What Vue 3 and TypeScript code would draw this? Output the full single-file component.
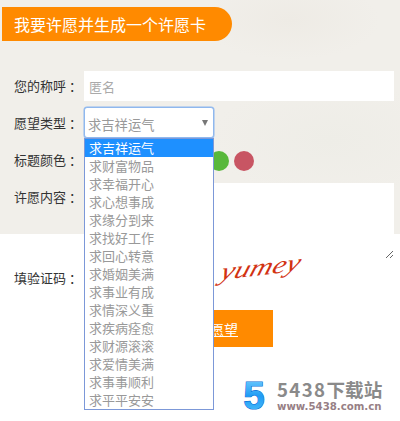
<script setup lang="ts">
const colors: string[] = ['#ff8a00', '#e0529c', '#8e5bd0', '#3d8fe0', '#2fb5b5', '#58b83c', '#c85563']
const wishes: string[] = [
  '求吉祥运气', '求财富物品', '求幸福开心', '求心想事成', '求缘分到来',
  '求找好工作', '求回心转意', '求婚姻美满', '求事业有成', '求情深义重',
  '求疾病痊愈', '求财源滚滚', '求爱情美满', '求事事顺利', '求平平安安'
]
</script>

<template>
  <div class="page">
    <section class="paper">
      <h1 class="title">我要许愿并生成一个许愿卡</h1>
      <div class="row name-row">
        <label class="label">您的称呼 ：</label>
        <input class="name" placeholder="匿名" />
      </div>
      <div class="row type-row">
        <label class="label">愿望类型 ：</label>
        <div class="select">
          <span>求吉祥运气</span>
          <i class="arrow"></i>
          <ul class="options">
            <li v-for="(w, i) in wishes" :key="w" :class="{ on: i === 0 }">{{ w }}</li>
          </ul>
        </div>
      </div>
      <div class="row color-row">
        <label class="label">标题颜色 ：</label>
        <div class="dots">
          <span v-for="c in colors" :key="c" class="dot" :style="{ background: c }"></span>
        </div>
      </div>
      <div class="row text-row">
        <label class="label">许愿内容 ：</label>
        <textarea class="content"></textarea>
      </div>
    </section>
    <div class="row code-row">
      <label class="label">填验证码 ：</label>
      <span class="captcha">yumey</span>
    </div>
    <button class="submit">提交愿望</button>
    <div class="logo">
      <svg class="five" width="26" height="44" viewBox="0 -6 26 44">
        <defs>
          <linearGradient id="fiveFill" x1="0" y1="0" x2="0" y2="1">
            <stop offset="0" stop-color="#7fd4ff" />
            <stop offset="0.5" stop-color="#1f9cf5" />
            <stop offset="1" stop-color="#53c4fb" />
          </linearGradient>
        </defs>
        <text x="1.5" y="29" class="five-text" fill="url(#fiveFill)">5</text>
      </svg>
      <div class="brand">
        <strong><span class="digits">5438</span>下载站</strong>
        <small>www.5438.com.cn</small>
      </div>
    </div>
  </div>
</template>

<style scoped>
.page {
  width: 400px;
  height: 421px;
  overflow: hidden;
  background: #fff;
  font-family: "Noto Sans CJK SC", "Noto Sans", sans-serif;
  font-size: 13px;
  color: #333;
}
.paper {
  height: 234px;
  padding-top: 7px;
  box-sizing: border-box;
  background:
    radial-gradient(ellipse 90px 40px at 290px 20px, #eeebe5 0%, transparent 100%),
    radial-gradient(ellipse 120px 60px at 330px 140px, #eeede7 0%, transparent 100%),
    #f1efea;
}
.title {
  margin: 0 0 0 2px;
  width: 230px;
  height: 34px;
  padding-left: 12px;
  box-sizing: border-box;
  background: #ff8a00;
  border-radius: 0 17px 17px 0;
  color: #fff;
  font-size: 16px;
  font-weight: 400;
  line-height: 34px;
}
.row {
  display: flex;
  padding-left: 14px;
}
.label {
  flex: none;
  width: 70px;
  line-height: 30px;
  white-space: nowrap;
}
.name-row {
  margin-top: 30px;
}
.name {
  width: 310px;
  height: 30px;
  box-sizing: border-box;
  border: 0;
  outline: 0;
  padding: 0 5px;
  background: #fff;
  font: 13px "Noto Sans CJK SC", sans-serif;
}
.name::placeholder {
  color: #aaa;
}
.type-row {
  margin-top: 6px;
}
.type-row .label {
  line-height: 32px;
}
.select {
  position: relative;
  width: 130px;
  height: 31px;
  box-sizing: border-box;
  border: 1px solid #8fb8ee;
  border-radius: 3px;
  box-shadow: 0 0 0 0.5px #8fb8ee;
  background: #fff;
  padding-left: 3px;
  font-size: 13.3px;
  line-height: 33px;
  color: #999;
  z-index: 2;
}
.arrow {
  position: absolute;
  right: 5px;
  top: 12px;
  border: 3px solid transparent;
  border-top: 6px solid #777;
  border-bottom: 0;
}
.options {
  position: absolute;
  left: -1px;
  top: 30px;
  width: 130px;
  box-sizing: border-box;
  margin: 0;
  padding: 0;
  list-style: none;
  background: #fff;
  border: 1px solid #7c98d8;
  font-size: 13px;
  line-height: 18px;
  color: #999;
}
.options li {
  height: 18px;
  padding-left: 4px;
}
.options li.on {
  background: #1e90ff;
  color: #fff;
}
.color-row {
  margin-top: 12px;
  height: 20px;
}
.color-row .label {
  line-height: 18px;
}
.dots {
  display: flex;
  gap: 5px;
}
.dot {
  width: 20px;
  height: 20px;
  border-radius: 50%;
}
.text-row {
  margin-top: 12px;
}
.text-row .label {
  line-height: 28px;
}
.content {
  width: 310px;
  height: 76px;
  box-sizing: border-box;
  border: 0;
  outline: 0;
  background: #fff;
  resize: both;
  display: block;
  margin: 0;
}
.code-row {
  margin-top: 29px;
  height: 30px;
}
.captcha {
  margin: -8px 0 0 137px;
  font-family: "Liberation Serif", serif;
  font-style: italic;
  font-size: 24px;
  letter-spacing: 0;
  color: #d23212;
  line-height: 34px;
  transform: rotate(-7deg) skewX(-24deg) scaleX(1.3);
  transform-origin: left center;
}
.submit {
  display: block;
  margin: 17px 0 0 147px;
  width: 126px;
  height: 37px;
  border: 0;
  padding: 0;
  background: #ff8a00;
  color: #fff;
  font: 14px "Noto Sans CJK SC", sans-serif;
  text-decoration: underline;
}
.logo {
  display: flex;
  align-items: flex-start;
  margin: 27px 0 0 242px;
  gap: 9px;
}
.five {
  flex: none;
}
.five-text {
  font-family: "Liberation Sans", sans-serif;
  font-weight: 700;
  font-size: 38px;
  stroke: #0f6fd6;
  stroke-width: 1.2px;
  paint-order: stroke;
}
.brand {
  display: flex;
  flex-direction: column;
  padding-top: 5px;
  white-space: nowrap;
}
.brand strong {
  font-size: 18.6px;
  line-height: 20px;
  color: #8a8a8a;
}
.digits {
  letter-spacing: 1.4px;
}
.brand small {
  font-family: "DejaVu Sans", sans-serif;
  font-weight: 700;
  font-size: 10.2px;
  line-height: 12px;
  margin-top: 2px;
  color: #977f85;
}
</style>
